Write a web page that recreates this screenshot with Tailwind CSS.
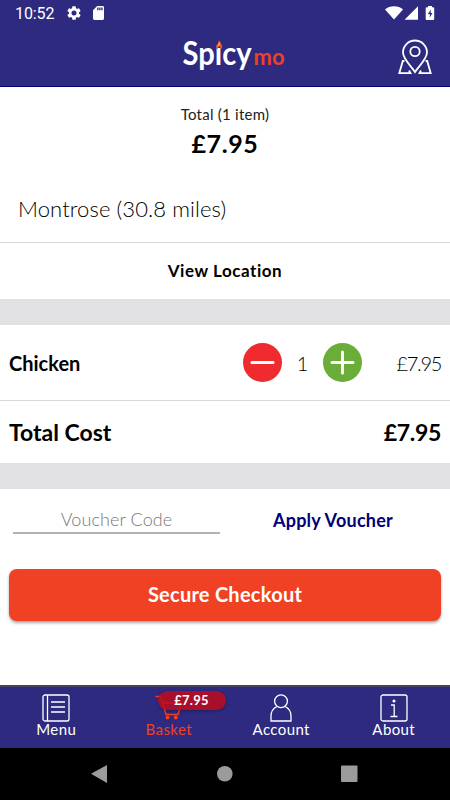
<!DOCTYPE html>
<html lang="en">
<head>
    <meta charset="UTF-8">
    <meta name="viewport" content="width=device-width, initial-scale=1.0">
    <title>Basket</title>
    <script src="https://cdn.jsdelivr.net/npm/@tailwindcss/browser@4"></script>
</head>
<body class="flex flex-col h-screen overflow-hidden bg-white text-black font-[Lato,sans-serif] whitespace-nowrap">
    <!-- Status bar -->
    <div class="h-7 shrink-0 bg-[#2d2a80] text-white flex items-center justify-between pl-[15px] pr-[15px]">
        <div class="flex items-center">
            <span class="font-[Roboto,sans-serif] text-[16px] leading-7 tracking-[-0.1px] w-[52px]">10:52</span>
            <svg class="w-[14px] h-[14px] -mt-0.5" viewBox="2 2 20 20" fill="currentColor"><path d="M19.14 12.94c.04-.3.06-.61.06-.94s-.02-.64-.07-.94l2.03-1.58a.5.5 0 0 0 .12-.61l-1.92-3.32a.49.49 0 0 0-.59-.22l-2.39.96a7 7 0 0 0-1.62-.94l-.36-2.54a.48.48 0 0 0-.48-.41h-3.84a.48.48 0 0 0-.47.41l-.36 2.54c-.59.24-1.13.57-1.62.94l-2.39-.96a.48.48 0 0 0-.59.22L2.74 8.87a.48.48 0 0 0 .12.61l2.03 1.58a6 6 0 0 0 0 1.88l-2.03 1.58a.5.5 0 0 0-.12.61l1.92 3.32c.12.22.37.29.59.22l2.39-.96c.5.38 1.03.7 1.62.94l.36 2.54c.05.24.24.41.48.41h3.84c.24 0 .44-.17.47-.41l.36-2.54c.59-.24 1.13-.56 1.62-.94l2.39.96c.22.08.47 0 .59-.22l1.92-3.32a.48.48 0 0 0-.12-.61zM12 15.6a3.6 3.6 0 1 1 0-7.2 3.6 3.6 0 0 1 0 7.2z"/></svg>
            <svg class="w-[11px] h-[14px] ml-[12px] -mt-0.5" viewBox="4 2 16 20" preserveAspectRatio="none" fill="currentColor"><path d="M18 2h-8L4 8v12a2 2 0 0 0 2 2h12a2 2 0 0 0 2-2V4a2 2 0 0 0-2-2zm-6 6h-2V4h2zm3 0h-2V4h2zm3 0h-2V4h2z"/></svg>
        </div>
        <div class="flex items-center -mt-0.5">
            <svg class="w-[18px] h-[14px]" viewBox="0 0 18 14" fill="currentColor"><path d="M0 3.500C2.500 1.300 5.500.3 9 .3s6.500 1 9 3.200L9 13.600z"/></svg>
            <svg class="w-[14px] h-[14px] ml-[1px]" viewBox="0 0 14 14" fill="currentColor"><path d="M14 .3v13.400H.5z"/></svg>
            <svg class="w-[10px] h-[14px] ml-[7px]" viewBox="0 0 10 14"><path d="M3 0h4v1.300h1.200q1 0 1 1V13q0 1-1 1H1.700q-1 0-1-1V2.300q0-1 1-1H3z" fill="#fff"/><path d="M6 3.500 2.800 8h2v3.500L7.500 7H5.600z" fill="#2d2a80"/></svg>
        </div>
    </div>

    <!-- Header -->
    <header class="relative h-[59px] shrink-0 bg-[#2d2a80] border-b border-[#000078] flex items-center justify-center">
        <svg class="w-[104px] h-[46px] ml-[18px] mt-1 overflow-visible" viewBox="0 0 104 46">
            <text x="0.500" y="29" font-size="32" font-weight="700" font-family="Lato, sans-serif" fill="#fff" textLength="69" lengthAdjust="spacingAndGlyphs">Spıcy</text>
            <text x="71.500" y="29" font-size="22" font-weight="700" font-family="Lato, sans-serif" fill="#ef4023" textLength="31" lengthAdjust="spacingAndGlyphs">mo</text>
            <path d="M35.800 13.500c-2.400-1.700-1.900-3.800-.4-5.200.9-.9 1.400-2.300 1.400-3.800 2 1.500 1.800 2.700 2.300 3.500 1.500 1.800 1.500 3.900-.5 5.500.3-1.500-.4-2.700-1.300-3.500-.8.900-1.500 2.100-1.500 3.500z" fill="#f15a24"/>
            <path d="M36.800 5.500c1.500 1.500 1.300 2.700.6 3.800l-1.600 1.500c-.5-1.500 1.300-2.500 1-5.300z" fill="#fbb03b"/>
        </svg>
        <svg class="absolute right-[17px] top-[11px] w-[36px] h-[36px]" viewBox="0 0 36 36" fill="none" stroke="#fff" stroke-width="1.800">
            <path d="M18 33C15 28 6 20 6 13.500a12 12 0 0 1 24 0C30 20 21 28 18 33z"/>
            <circle cx="18" cy="12.500" r="4.700"/>
            <path d="M7.500 22H5.800L2.300 34.200H13.500L12 31.500M28.500 22h1.700l3.500 12.200H22.500L24 31.500"/>
        </svg>
    </header>

    <!-- Basket summary -->
    <section class="h-[155px] shrink-0">
        <p class="text-center text-[15px] leading-5 pt-[17px] tracking-[0.25px] text-[#222]">Total (1 item)</p>
        <p class="text-center text-[25px] leading-8 mt-[3px] font-bold tracking-[0.6px]">£7.95</p>
        <p class="pl-[18px] mt-[34px] text-[22px] leading-8 font-light tracking-[0.1px]">Montrose (30.8 miles)</p>
    </section>
    <div class="h-[57px] shrink-0 border-t border-[#d9d9d9] flex items-center justify-center text-[17px] font-bold tracking-[0.55px]">View Location</div>
    <div class="h-[26px] shrink-0 bg-[#e2e2e4]"></div>

    <!-- Items -->
    <div class="h-[75px] shrink-0 flex items-center pl-[9px] pr-[9px]">
        <span class="text-[20px] font-bold w-[234px]">Chicken</span>
        <svg class="w-[39px] h-[39px] shrink-0" viewBox="0 0 39 39"><circle cx="19.500" cy="19.500" r="19.500" fill="#f02b2f"/><path d="M9 19.500h21" stroke="#fff" stroke-width="3" stroke-linecap="round"/></svg>
        <span class="w-[41px] text-center text-[20px] font-light">1</span>
        <svg class="w-[39px] h-[39px] shrink-0" viewBox="0 0 39 39"><circle cx="19.500" cy="19.500" r="19.500" fill="#6aad38"/><path d="M9 19.500h21M19.500 9v21" stroke="#fff" stroke-width="3" stroke-linecap="round"/></svg>
        <span class="ml-auto text-[20px] font-light tracking-[-1.3px]">£7.95</span>
    </div>
    <div class="h-[63px] shrink-0 border-t border-[#d9d9d9] flex items-center justify-between px-[9px] text-[23px] font-bold">
        <span>Total Cost</span>
        <span class="tracking-[-0.3px]">£7.95</span>
    </div>
    <div class="h-[26px] shrink-0 bg-[#e2e2e4]"></div>

    <!-- Voucher and checkout -->
    <div class="h-[80px] shrink-0 flex pl-[13px]">
        <div class="w-[207px] h-[45px] border-b-2 border-[#b3b3b3] flex items-center justify-center pt-[17px] text-[18px] font-light tracking-[0.1px] text-[#777]">Voucher Code</div>
        <div class="w-[226px] h-[62px] flex items-center justify-center text-[18px] font-bold tracking-[0.25px] text-[#000078]">Apply Voucher</div>
    </div>
    <button class="h-[52px] w-[432px] shrink-0 mx-auto rounded-[8px] bg-[#f04124] text-white text-[20px] leading-5 pb-[2px] font-bold tracking-[0.25px] shadow-[0_2px_3px_rgba(0,0,0,0.35)]">Secure Checkout</button>

    <!-- Tab bar -->
    <nav class="mt-auto h-[63px] shrink-0 bg-[#2d2a80] border-t-2 border-[#45445f] grid grid-cols-4 text-white text-[15px] tracking-[0.4px]">
        <div class="flex flex-col items-center pt-[7px]">
            <svg class="w-[28px] h-[28px]" viewBox="0 0 28 28" fill="none" stroke="currentColor" stroke-width="1.300"><rect x="1" y="1" width="26" height="26" rx="2"/><path d="M5.500 1v26M9 8h14M9 13h14M9 18h14"/></svg>
            <span class="leading-4 -mt-px">Menu</span>
        </div>
        <div class="relative flex flex-col items-center pt-[7px] text-[#ef4023]">
            <svg class="w-[28px] h-[28px]" viewBox="0 0 28 28" fill="none" stroke="currentColor" stroke-width="1.500"><path d="M.5 2.500h5.200L11 20.500h12L26.500 9H7.700"/><circle cx="12.500" cy="23.500" r="1.200" fill="currentColor"/><circle cx="20.800" cy="23.500" r="1.200" fill="currentColor"/></svg>
            <span class="leading-4 -mt-px">Basket</span>
            <!-- Basket value badge, the cart shows through it -->
            <div class="absolute left-[45px] top-[4px] w-[68px] h-[19px] rounded-full bg-[#be0a1c]/85 shadow-[0_1px_3px_rgba(0,0,0,0.3)] text-white text-[13px] leading-[19px] font-bold text-center tracking-[0.3px]">£7.95</div>
        </div>
        <div class="flex flex-col items-center pt-[7px]">
            <svg class="w-[28px] h-[28px]" viewBox="0 0 28 28" fill="none" stroke="currentColor" stroke-width="1.300"><circle cx="14" cy="7.200" r="6.400"/><path d="M9.800 12.500C6 14.500 4 18 4 22v5h20v-5c0-4-2-7.500-5.800-9.500"/></svg>
            <span class="leading-4 -mt-px">Account</span>
        </div>
        <div class="flex flex-col items-center pt-[7px]">
            <svg class="w-[28px] h-[28px]" viewBox="0 0 28 28" fill="none" stroke="currentColor" stroke-width="1.300"><rect x="1" y="1" width="26" height="26" rx="2"/><path d="M11 11h3.200v11.500M10.500 22.500h7"/><circle cx="14" cy="7" r=".9" fill="currentColor"/></svg>
            <span class="leading-4 -mt-px">About</span>
        </div>
    </nav>

    <!-- System navigation -->
    <div class="h-[52px] shrink-0 bg-black">
        <svg class="w-full h-full" viewBox="0 0 450 52" fill="#9b9b9b"><path d="M91 25.700 107 17v18z"/><circle cx="224.800" cy="25.700" r="7.800"/><rect x="341" y="17.500" width="16.500" height="16.500" rx="1"/></svg>
    </div>
</body>
</html>
